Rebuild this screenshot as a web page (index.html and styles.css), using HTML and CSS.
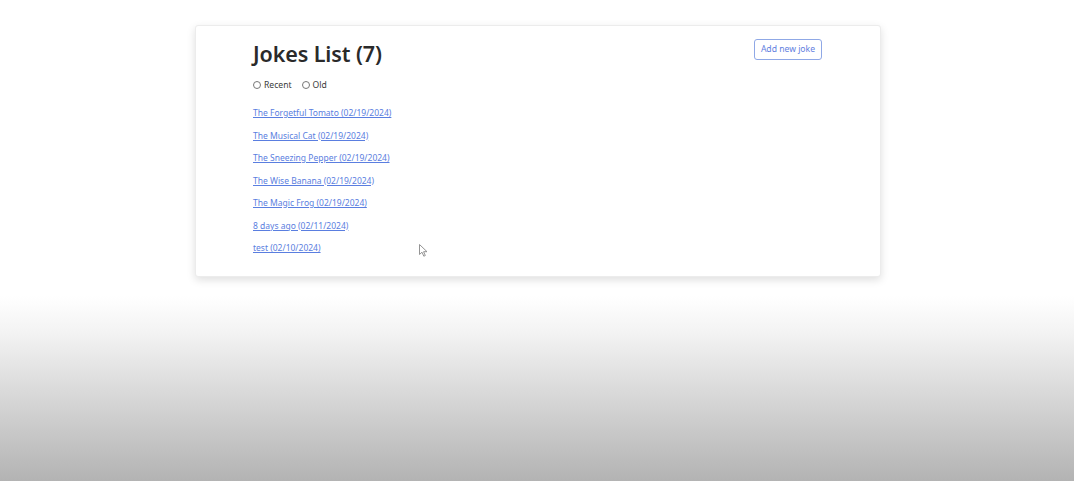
FILE: index.html
```html
<!DOCTYPE html>
<html lang="en">
<head>
<meta charset="utf-8">
<title>Jokes List</title>
<link rel="stylesheet" href="styles.css">
</head>
<body>
<main class="page">
  <section class="card">
    <header class="card-head">
      <h1 class="title">Jokes List (7)</h1>
      <button class="btn-add" type="button">Add new joke</button>
    </header>
    <div class="filters">
      <label class="radio"><span class="radio-dot"></span>Recent</label>
      <label class="radio"><span class="radio-dot"></span>Old</label>
    </div>
    <ul class="jokes">
      <li><a href="#">The Forgetful Tomato (02/19/2024)</a></li>
      <li><a href="#">The Musical Cat (02/19/2024)</a></li>
      <li><a href="#">The Sneezing Pepper (02/19/2024)</a></li>
      <li><a href="#">The Wise Banana (02/19/2024)</a></li>
      <li><a href="#">The Magic Frog (02/19/2024)</a></li>
      <li><a href="#">8 days ago (02/11/2024)</a></li>
      <li class="last"><a href="#">test (02/10/2024)</a><svg class="cursor" width="9" height="13" viewBox="0 0 9 13"><path d="M0.5 0.5 L0.5 10.5 L3 8.2 L4.8 12.2 L6.3 11.5 L4.6 7.7 L8 7.7 Z" fill="#fff" stroke="#888" stroke-width="0.9" stroke-linejoin="round"/></svg></li>
    </ul>
  </section>
</main>
</body>
</html>
```

FILE: styles.css
```css
html, body {
  margin: 0;
  height: 100%;
}
body {
  background: linear-gradient(to bottom, #ffffff 0, #ffffff 296px, #f4f4f4 330px, #b3b3b3 481px);
  font-family: "Noto Sans", "Open Sans", sans-serif;
  color: #212529;
}
.page {
  padding-top: 25px;
  display: flex;
  justify-content: center;
}
.card {
  width: 569px;
  margin-left: 2px;
  background: #fff;
  border-radius: 3px;
  border: 1px solid #ececec;
  box-shadow: 0 3px 9px rgba(0, 0, 0, 0.13);
  padding: 13px 58px 22px 57px;
}
.card-head {
  display: flex;
  justify-content: space-between;
  align-items: flex-start;
}
.title {
  margin: 0;
  font-size: 21.5px;
  font-weight: 600;
  line-height: 29px;
  color: #2a2a2a;
  letter-spacing: -0.1px;
}
.btn-add {
  height: 21px;
  padding: 0 6px;
  border: 1px solid #8fa8e6;
  border-radius: 3px;
  background: #fff;
  color: #5f7ee0;
  font-family: inherit;
  font-size: 8.6px;
  line-height: 19px;
}
.filters {
  display: flex;
  gap: 10px;
  margin-top: 11px;
  height: 12px;
  align-items: center;
}
.radio {
  display: flex;
  align-items: center;
  gap: 3px;
  font-size: 8.6px;
  color: #3a3a3a;
}
.radio-dot {
  width: 6px;
  height: 6px;
  border: 1px solid #777;
  border-radius: 50%;
}
.jokes {
  list-style: none;
  margin: 16px 0 0;
  padding: 0;
  display: flex;
  flex-direction: column;
  gap: 10.5px;
}
.jokes li {
  height: 12px;
  line-height: 12px;
  font-size: 8.5px;
  position: relative;
}
.jokes a {
  color: #5a7ee0;
  text-decoration: underline;
  text-underline-offset: 1px;
}
.cursor {
  position: absolute;
  left: 166px;
  top: 2px;
}
```
